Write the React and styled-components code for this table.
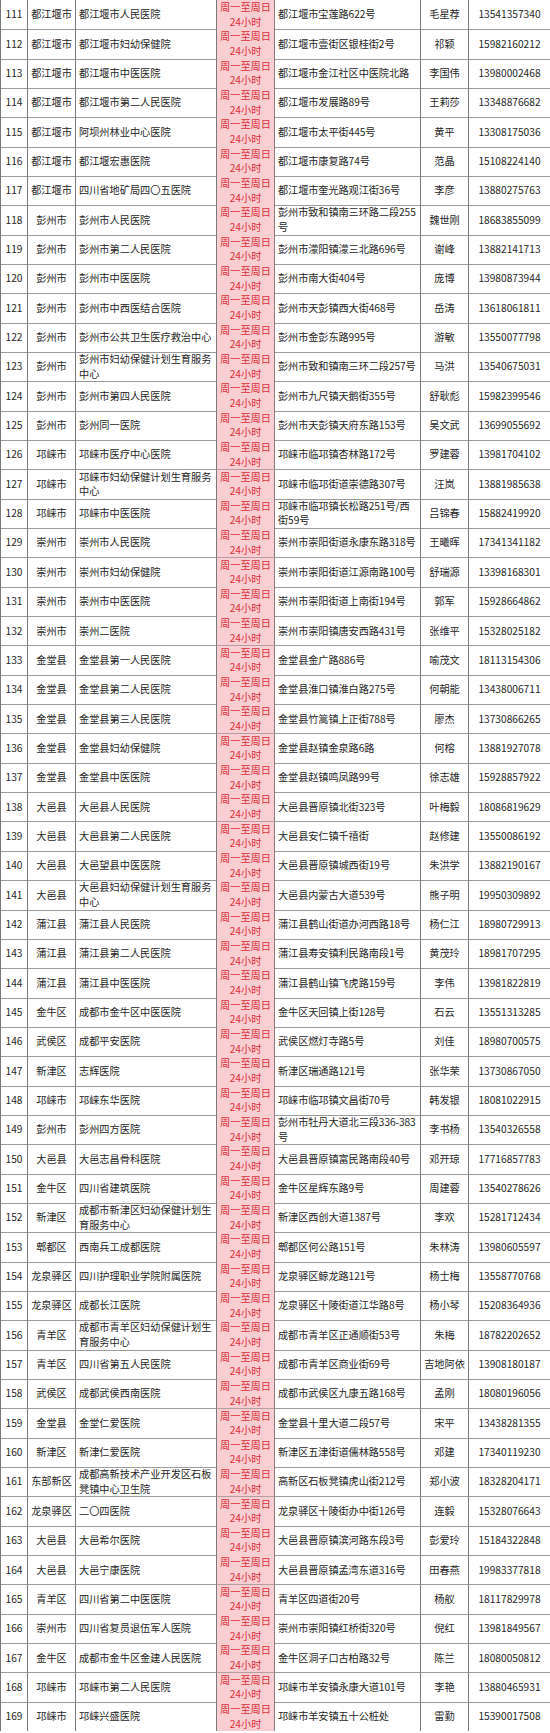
import React from "react";
import styled, { createGlobalStyle } from "styled-components";

const GlobalStyle = createGlobalStyle`
  html, body {
    margin: 0;
    padding: 0;
    background: #ffffff;
  }
  body {
    font-family: "Noto Sans CJK SC", "Noto Sans", sans-serif;
    color: #262626;
  }
`;

// [no, district, hospital, address, contact, phone]
const rows = [
  [111, "都江堰市", "都江堰市人民医院", "都江堰市宝莲路622号", "毛星荐", "13541357340"],
  [112, "都江堰市", "都江堰市妇幼保健院", "都江堰市壹街区银桂街2号", "祁颖", "15982160212"],
  [113, "都江堰市", "都江堰市中医医院", "都江堰市金江社区中医院北路", "李国伟", "13980002468"],
  [114, "都江堰市", "都江堰市第二人民医院", "都江堰市发展路89号", "王莉莎", "13348876682"],
  [115, "都江堰市", "阿坝州林业中心医院", "都江堰市太平街445号", "黄平", "13308175036"],
  [116, "都江堰市", "都江堰宏惠医院", "都江堰市康复路74号", "范晶", "15108224140"],
  [117, "都江堰市", "四川省地矿局四〇五医院", "都江堰市奎光路观江街36号", "李彦", "13880275763"],
  [118, "彭州市", "彭州市人民医院", "彭州市致和镇南三环路二段255\n号", "魏世刚", "18683855099"],
  [119, "彭州市", "彭州市第二人民医院", "彭州市濛阳镇濛三北路696号", "谢峰", "13882141713"],
  [120, "彭州市", "彭州市中医医院", "彭州市南大街404号", "庞博", "13980873944"],
  [121, "彭州市", "彭州市中西医结合医院", "彭州市天彭镇西大街468号", "岳涛", "13618061811"],
  [122, "彭州市", "彭州市公共卫生医疗救治中心", "彭州市金彭东路995号", "游敏", "13550077798"],
  [123, "彭州市", "彭州市妇幼保健计划生育服务\n中心", "彭州市致和镇南三环二段257号", "马洪", "13540675031"],
  [124, "彭州市", "彭州市第四人民医院", "彭州市九尺镇天鹅街355号", "舒耿彪", "15982399546"],
  [125, "彭州市", "彭州同一医院", "彭州市天彭镇天府东路153号", "吴文武", "13699055692"],
  [126, "邛崃市", "邛崃市医疗中心医院", "邛崃市临邛镇杏林路172号", "罗建蓉", "13981704102"],
  [127, "邛崃市", "邛崃市妇幼保健计划生育服务\n中心", "邛崃市临邛街道崇德路307号", "汪岚", "13881985638"],
  [128, "邛崃市", "邛崃市中医医院", "邛崃市临邛镇长松路251号/西\n街59号", "吕锦春", "15882419920"],
  [129, "崇州市", "崇州市人民医院", "崇州市崇阳街道永康东路318号", "王曦晖", "17341341182"],
  [130, "崇州市", "崇州市妇幼保健院", "崇州市崇阳街道江源南路100号", "舒瑞源", "13398168301"],
  [131, "崇州市", "崇州市中医医院", "崇州市崇阳街道上南街194号", "郭军", "15928664862"],
  [132, "崇州市", "崇州二医院", "崇州市崇阳镇唐安西路431号", "张维平", "15328025182"],
  [133, "金堂县", "金堂县第一人民医院", "金堂县金广路886号", "喻茂文", "18113154306"],
  [134, "金堂县", "金堂县第二人民医院", "金堂县淮口镇淮白路275号", "何朝能", "13438006711"],
  [135, "金堂县", "金堂县第三人民医院", "金堂县竹篙镇上正街788号", "廖杰", "13730866265"],
  [136, "金堂县", "金堂县妇幼保健院", "金堂县赵镇金泉路6路", "何榕", "13881927078"],
  [137, "金堂县", "金堂县中医医院", "金堂县赵镇鸣凤路99号", "徐志雄", "15928857922"],
  [138, "大邑县", "大邑县人民医院", "大邑县晋原镇北街323号", "叶梅毅", "18086819629"],
  [139, "大邑县", "大邑县第二人民医院", "大邑县安仁镇千禧街", "赵修建", "13550086192"],
  [140, "大邑县", "大邑望县中医医院", "大邑县晋原镇城西街19号", "朱洪学", "13882190167"],
  [141, "大邑县", "大邑县妇幼保健计划生育服务\n中心", "大邑县内蒙古大道539号", "熊子明", "19950309892"],
  [142, "蒲江县", "蒲江县人民医院", "蒲江县鹤山街道办河西路18号", "杨仁江", "18980729913"],
  [143, "蒲江县", "蒲江县第二人民医院", "蒲江县寿安镇利民路南段1号", "黄茂玲", "18981707295"],
  [144, "蒲江县", "蒲江县中医医院", "蒲江县鹤山镇飞虎路159号", "李伟", "13981822819"],
  [145, "金牛区", "成都市金牛区中医医院", "金牛区天回镇上街128号", "石云", "13551313285"],
  [146, "武侯区", "成都平安医院", "武侯区燃灯寺路5号", "刘佳", "18980700575"],
  [147, "新津区", "志辉医院", "新津区瑞通路121号", "张华荣", "13730867050"],
  [148, "邛崃市", "邛崃东华医院", "邛崃市临邛镇文昌街70号", "韩发银", "18081022915"],
  [149, "彭州市", "彭州四方医院", "彭州市牡丹大道北三段336-383\n号", "李书杨", "13540326558"],
  [150, "大邑县", "大邑志昌骨科医院", "大邑县晋原镇富民路南段40号", "邓开琼", "17716857783"],
  [151, "金牛区", "四川省建筑医院", "金牛区星辉东路9号", "周建蓉", "13540278626"],
  [152, "新津区", "成都市新津区妇幼保健计划生\n育服务中心", "新津区西创大道1387号", "李欢", "15281712434"],
  [153, "郫都区", "西南兵工成都医院", "郫都区何公路151号", "朱林涛", "13980605597"],
  [154, "龙泉驿区", "四川护理职业学院附属医院", "龙泉驿区鲸龙路121号", "杨士梅", "13558770768"],
  [155, "龙泉驿区", "成都长江医院", "龙泉驿区十陵街道江华路8号", "杨小琴", "15208364936"],
  [156, "青羊区", "成都市青羊区妇幼保健计划生\n育服务中心", "成都市青羊区正通顺街53号", "朱梅", "18782202652"],
  [157, "青羊区", "四川省第五人民医院", "成都市青羊区商业街69号", "吉地阿依", "13908180187"],
  [158, "武侯区", "成都武侯西南医院", "成都市武侯区九康五路168号", "孟刚", "18080196056"],
  [159, "金堂县", "金堂仁爱医院", "金堂县十里大道二段57号", "宋平", "13438281355"],
  [160, "新津区", "新津仁爱医院", "新津区五津街道儒林路558号", "邓建", "17340119230"],
  [161, "东部新区", "成都高新技术产业开发区石板\n凳镇中心卫生院", "高新区石板凳镇虎山街212号", "郑小波", "18328204171"],
  [162, "龙泉驿区", "二〇四医院", "龙泉驿区十陵街办中街126号", "连毅", "15328076643"],
  [163, "大邑县", "大邑希尔医院", "大邑县晋原镇滨河路东段3号", "彭爱玲", "15184322848"],
  [164, "大邑县", "大邑宁康医院", "大邑县晋原镇孟湾东道316号", "田春燕", "19983377818"],
  [165, "青羊区", "四川省第二中医医院", "青羊区四道街20号", "杨舣", "18117829978"],
  [166, "崇州市", "四川省复员退伍军人医院", "崇州市崇阳镇红桥街320号", "倪红", "13981849567"],
  [167, "金牛区", "成都市金牛区金建人民医院", "金牛区洞子口古柏路32号", "陈兰", "18080050812"],
  [168, "邛崃市", "邛崃市第二人民医院", "邛崃市羊安镇永康大道101号", "李艳", "13880465931"],
  [169, "邛崃市", "邛崃兴盛医院", "邛崃市羊安镇五十公桩处", "雷勤", "15390017508"],
];

const Table = styled.div`
  width: 550px;
  display: flex;
  flex-direction: column;
  border-left: 1px solid #7a7a7a;
  box-sizing: border-box;
  overflow: hidden;
`;

const Row = styled.div`
  display: grid;
  grid-template-columns: 27px 48px 141px 58px 146px 48px 1fr;
  height: 29.35px;
  flex: none;
`;

const Cell = styled.div`
  display: flex;
  align-items: center;
  justify-content: ${(p) => (p.$align === "left" ? "flex-start" : "center")};
  padding: ${(p) => (p.$align === "left" ? "0 0 0 3px" : "0")};
  box-sizing: border-box;
  border-right: ${(p) => (p.$last ? "none" : "1px solid #7a7a7a")};
  border-bottom: 1px solid #9c9c9c;
  font-size: 10.2px;
  line-height: 14.6px;
  white-space: pre;
  color: #262626;
  min-width: 0;
`;

const AddressCell = styled(Cell)`
  letter-spacing: -0.1px;
`;

const TimeCell = styled(Cell)`
  flex-direction: column;
  justify-content: center;
  background: #f9cfd3;
  color: #dc2f3b;
  border-right-color: #8d7c7e;
  border-bottom-color: #b89ea1;
`;

const App = () => (
  <>
    <GlobalStyle />
    <Table>
      {rows.map(([no, district, hospital, address, contact, phone]) => (
        <Row key={no}>
          <Cell>{no}</Cell>
          <Cell>{district}</Cell>
          <Cell $align="left">{hospital}</Cell>
          <TimeCell>
            <span>周一至周日</span>
            <span>24小时</span>
          </TimeCell>
          <AddressCell $align="left">{address}</AddressCell>
          <Cell>{contact}</Cell>
          <Cell $last>{phone}</Cell>
        </Row>
      ))}
    </Table>
  </>
);

export default App;
